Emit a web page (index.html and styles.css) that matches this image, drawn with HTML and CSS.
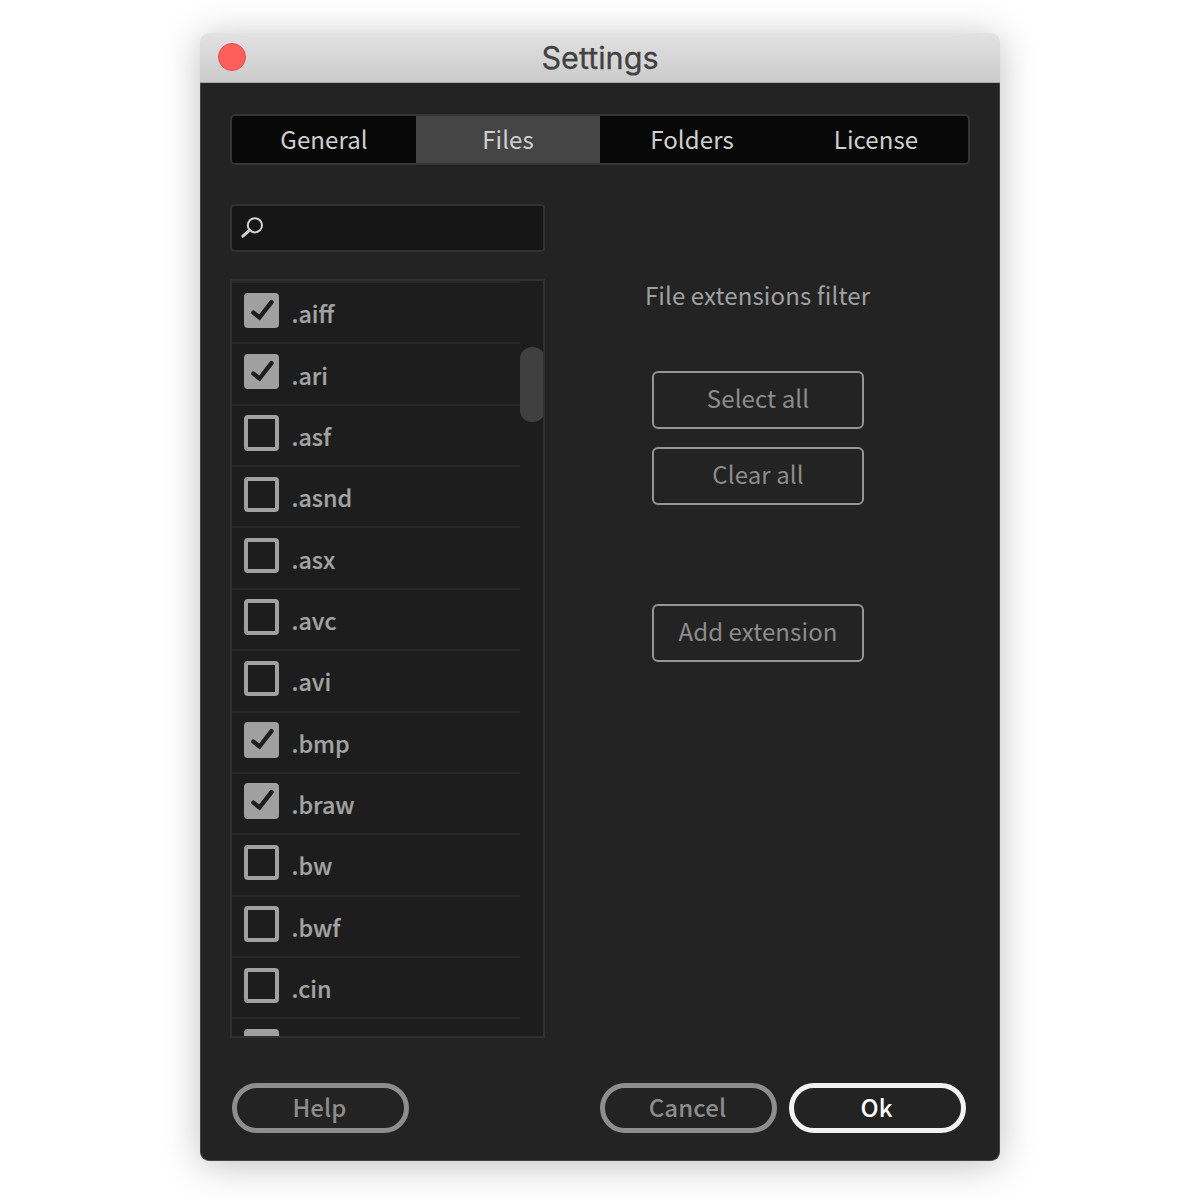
FILE: index.html
```html
<!DOCTYPE html>
<html lang="en">
<head>
<meta charset="utf-8">
<title>Settings</title>
<link rel="stylesheet" href="styles.css">
</head>
<body>
<svg class="symbols" width="0" height="0">
  <symbol id="check" viewBox="0 0 36 36"><path d="M9.4 19.6l6.1 4.9L27.5 9.2" fill="none" stroke="#1e1e1e" stroke-width="4.4" stroke-linecap="round" stroke-linejoin="miter"/></symbol>
</svg>
<main class="window">
  <header class="titlebar"><span class="close"></span><h1 class="title">Settings</h1></header>
  <div class="content">
    <nav class="tabs">
      <span class="tab">General</span><span class="tab tab-active">Files</span><span class="tab">Folders</span><span class="tab">License</span>
    </nav>
    <div class="columns">
      <section class="left">
        <div class="search">
          <svg width="24" height="24" viewBox="0 0 24 24" fill="none" stroke="#d0d0d0" stroke-linecap="round"><circle cx="13.9" cy="9.3" r="7.1" stroke-width="2"/><path d="M8.4 14.4L1.9 20.2" stroke-width="3"/></svg>
        </div>
        <div class="list">
          <ul class="rows">
            <li class="row"><span class="box checked"><svg><use href="#check"/></svg></span><span class="label">.aiff</span></li>
            <li class="row"><span class="box checked"><svg><use href="#check"/></svg></span><span class="label">.ari</span></li>
            <li class="row"><span class="box"></span><span class="label">.asf</span></li>
            <li class="row"><span class="box"></span><span class="label">.asnd</span></li>
            <li class="row"><span class="box"></span><span class="label">.asx</span></li>
            <li class="row"><span class="box"></span><span class="label">.avc</span></li>
            <li class="row"><span class="box"></span><span class="label">.avi</span></li>
            <li class="row"><span class="box checked"><svg><use href="#check"/></svg></span><span class="label">.bmp</span></li>
            <li class="row"><span class="box checked"><svg><use href="#check"/></svg></span><span class="label">.braw</span></li>
            <li class="row"><span class="box"></span><span class="label">.bw</span></li>
            <li class="row"><span class="box"></span><span class="label">.bwf</span></li>
            <li class="row"><span class="box"></span><span class="label">.cin</span></li>
            <li class="row"><span class="box checked"></span></li>
          </ul>
          <div class="scroll"><div class="thumb"></div></div>
        </div>
      </section>
      <section class="right">
        <p class="caption">File extensions filter</p>
        <button class="action">Select all</button>
        <button class="action">Clear all</button>
        <button class="action add">Add extension</button>
      </section>
    </div>
    <footer class="footer">
      <button class="pill help">Help</button>
      <button class="pill">Cancel</button>
      <button class="pill ok">Ok</button>
    </footer>
  </div>
</main>
</body>
</html>
```
FILE: styles.css
```css
* { box-sizing: border-box; }
body {
  margin: 0;
  padding: 33px 200px 0;
  height: 1200px;
  overflow: hidden;
  background: #fff;
  font-family: "Noto Sans CJK SC", "Noto Sans", sans-serif;
  font-size: 24px;
  line-height: 36px;
}
.symbols { display: block; }
.window {
  width: 800px;
  height: 1128px;
  border-radius: 9px;
  box-shadow: 0 4px 36px rgba(0, 0, 0, 0.25);
}
.titlebar {
  display: flex;
  align-items: center;
  height: 50px;
  padding: 0 18px 1px;
  background: linear-gradient(#e2e2e2, #cbcbcb);
  border-bottom: 1px solid #aaa;
  border-radius: 9px 9px 0 0;
}
.close {
  width: 28px;
  height: 28px;
  border-radius: 50%;
  background: #fe5f5a;
  border: 1px solid #e84c49;
}
.title {
  flex: 1;
  margin: 2px 28px 0 0;
  text-align: center;
  font: 400 30.6px/40px Inter, sans-serif;
  -webkit-text-stroke: 0.3px #424242;
  color: #424242;
}
.content {
  height: 1078px;
  padding: 31px 29px 26px;
  background: #232323;
  border: 1px solid #444;
  border-width: 0 1px 1px;
  border-radius: 0 0 9px 9px;
}
.tabs {
  display: flex;
  height: 51px;
  border: 2px solid #353535;
  border-radius: 5px;
  background: #080808;
  overflow: hidden;
}
.tab {
  flex: 1;
  text-align: center;
  color: #d0d0d0;
  letter-spacing: 0.1px;
  line-height: 45px;
}
.tab-active { background: #454545; }
.columns { display: flex; margin-top: 39px; }
.left { width: 315px; }
.search {
  height: 48px;
  padding: 10px 9px;
  border: 2px solid #323232;
  border-radius: 4px;
  background: #161616;
}
.search svg { display: block; }
.list {
  display: flex;
  height: 759px;
  margin-top: 27px;
  border: 2px solid #303030;
  background: #1d1d1d;
  overflow: hidden;
}
.rows {
  flex: none;
  width: 288px;
  margin: 0;
  padding: 0;
  list-style: none;
}
.row {
  display: flex;
  height: 61.36px;
  padding: 9.6px 0 0 12px;
  border-top: 2px solid #272727;
}
.box {
  width: 35px;
  height: 35.4px;
  border: 4px solid #a0a0a0;
  border-radius: 4px;
}
.checked { background: #a0a0a0; }
.box svg { display: block; width: 36px; height: 36px; margin: -4px; }
.label {
  margin: 2.6px 0 0 12.5px;
  font-size: 23.3px;
  font-weight: 500;
  -webkit-text-stroke: 0.2px #a3a3a3;
  color: #a3a3a3;
}
.scroll { flex: none; padding-top: 66px; }
.thumb {
  width: 25px;
  height: 75px;
  border-radius: 12px;
  background: #404040;
}
.right {
  flex: 1;
  display: flex;
  flex-direction: column;
  align-items: center;
  padding-top: 73px;
}
.caption { margin: 0 0 58px; letter-spacing: 0.12px; color: #a0a0a0; }
button { font: inherit; background: none; padding: 0; color: #8c8c8c; }
.action {
  width: 212px;
  height: 58px;
  margin-bottom: 17.5px;
  border: 2px solid #959595;
  border-radius: 6px;
  letter-spacing: 0.1px;
  line-height: 50px;
  padding: 0 0 4px 1px;
}
.add { margin-top: 82px; }
.footer {
  display: flex;
  gap: 12px;
  margin-top: 45px;
  padding: 0 4px 0 2px;
}
.pill {
  width: 177px;
  height: 50px;
  padding: 0 2px 3px 0;
  border: 5px solid #8e8e8e;
  border-radius: 25px;
  font-weight: 500;
  letter-spacing: 0.15px;
  line-height: 36px;
}
.help { margin-right: auto; }
.ok { color: #fff; border-color: #f2f2f2; }
```
